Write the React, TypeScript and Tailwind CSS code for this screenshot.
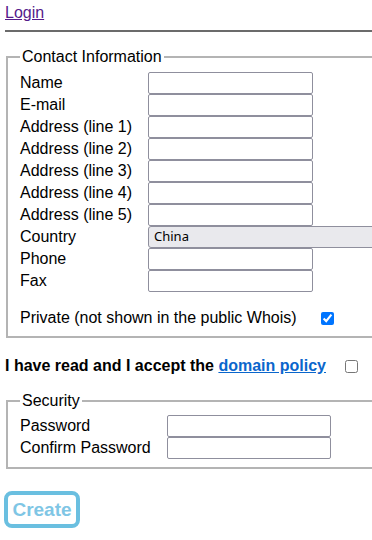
import { useState } from "react";

// Domain registration form: contact details, policy checkbox, password.

const CONTACT_FIELDS = [
  "Name",
  "E-mail",
  "Address (line 1)",
  "Address (line 2)",
  "Address (line 3)",
  "Address (line 4)",
  "Address (line 5)",
];

function TextRow({ label, labelWidth }: { label: string; labelWidth: string }) {
  return (
    <div className="flex h-[22px] items-center">
      <span className={["shrink-0 leading-[18px]", labelWidth].join(" ")}>{label}</span>
      <input
        type="text"
        className="h-[22px] w-[165px] shrink-0 rounded-[2px] border border-[#8f8f9d] bg-white px-[2px] text-[13px] outline-none"
      />
    </div>
  );
}

function PasswordRow({ label }: { label: string }) {
  return (
    <div className="flex h-[22px] items-center">
      <span className="w-[147px] shrink-0 leading-[18px]">{label}</span>
      <input
        type="password"
        className="h-[22px] w-[164px] shrink-0 rounded-[2px] border border-[#8f8f9d] bg-white px-[2px] text-[13px] outline-none"
      />
    </div>
  );
}

export default function App() {
  const [priv, setPriv] = useState(true);
  const [accept, setAccept] = useState(false);

  return (
    <div className="h-[540px] w-[372px] overflow-hidden bg-white font-['Liberation_Sans',Arial,sans-serif] text-[16px] text-black">
      <div className="pl-[5px] pt-[4px] leading-[18px]">
        <a href="#" className="text-[#551a8b] underline">
          Login
        </a>
      </div>
      <hr className="ml-[5px] mt-[8px] border-t-2 border-[#6b6b6b]" />

      <fieldset className="ml-[6px] mt-[16px] w-[420px] border-2 border-[#b4b4b4] pb-[7px] pl-[12px] pt-[6px]">
        <legend className="px-[2px] leading-[18px]">Contact Information</legend>
        {CONTACT_FIELDS.map((f) => (
          <TextRow key={f} label={f} labelWidth="w-[128px]" />
        ))}
        <div className="flex h-[22px] items-center">
          <span className="w-[128px] shrink-0 leading-[18px]">Country</span>
          <select
            defaultValue="China"
            className="h-[22px] w-[300px] shrink-0 appearance-none rounded-[3px] border border-[#8f8f9d] bg-[#e9e9ed] pl-[5px] font-['Noto_Sans',sans-serif] text-[13px] outline-none"
          >
            <option>China</option>
          </select>
        </div>
        <TextRow label="Phone" labelWidth="w-[128px]" />
        <TextRow label="Fax" labelWidth="w-[128px]" />

        <div className="mt-[15px] flex h-[22px] items-center">
          <span className="w-[301px] shrink-0 leading-[18px]">
            Private (not shown in the public Whois)
          </span>
          <input
            type="checkbox"
            checked={priv}
            onChange={() => setPriv((p) => !p)}
            className="h-[13px] w-[13px] accent-[#0075ff]"
          />
        </div>
      </fieldset>

      <div className="ml-[5px] mt-[18px] flex h-[20px] items-center">
        <span className="w-[340px] shrink-0 font-bold leading-[18px]">
          I have read and I accept the{" "}
          <a href="#" className="text-[#0a66cc] underline">
            domain policy
          </a>
        </span>
        <input
          type="checkbox"
          checked={accept}
          onChange={() => setAccept((a) => !a)}
          className="h-[13px] w-[13px] accent-[#0075ff]"
        />
      </div>

      <fieldset className="ml-[6px] mt-[16px] w-[420px] border-2 border-[#b4b4b4] pb-[8px] pl-[12px] pt-[5px]">
        <legend className="px-[2px] leading-[18px]">Security</legend>
        <PasswordRow label="Password" />
        <PasswordRow label="Confirm Password" />
      </fieldset>

      <button
        type="button"
        className="ml-[4px] mt-[22px] flex h-[37px] w-[76px] items-center justify-center rounded-[8px] border-4 border-[#6abfe0] bg-white text-[19px] font-bold leading-[22px] text-[#7fc6e5]"
      >
        Create
      </button>
    </div>
  );
}
